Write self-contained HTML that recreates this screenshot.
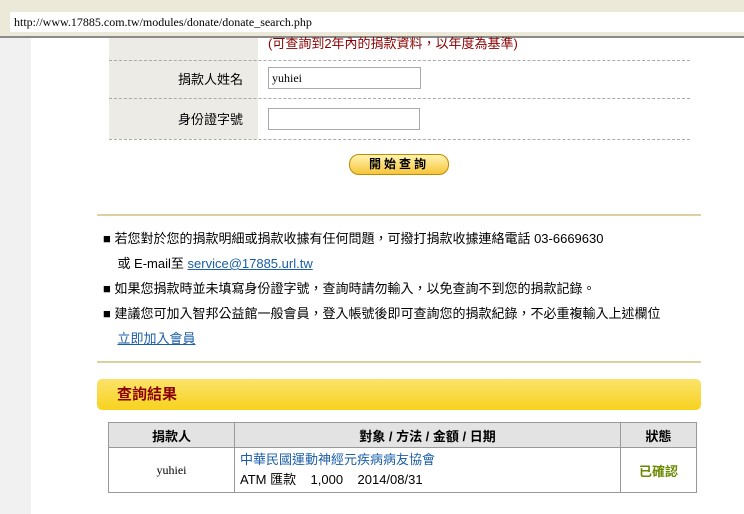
<!DOCTYPE html>
<html><head><meta charset="utf-8"><style>
body{margin:0;width:744px;height:514px;overflow:hidden;background:#fff;font-family:"Liberation Serif","Noto Sans CJK TC",serif;font-size:13px;position:relative;color:#000}
.a{position:absolute}
.cjk{font-family:"Liberation Sans","Noto Sans CJK TC",sans-serif}
</style></head><body>
<div class="a" style="left:0;top:0;width:744px;height:8px;background:#ece9d8"></div>
<div class="a" style="left:0;top:8px;width:744px;height:28px;background:#ece9d8;border-bottom:2px solid #8a8a8a"></div>
<div class="a" style="left:10px;top:12px;width:734px;height:20px;background:#fff;font-size:12px;line-height:20px;padding-left:4px">http://www.17885.com.tw/modules/donate/donate_search.php</div>
<div class="a" style="left:0;top:38px;width:31px;height:476px;background:#f1f1f1"></div>
<div class="a" style="left:109px;top:38px;width:149px;height:101px;background:#ecebe6"></div>
<div class="a cjk" style="left:268px;top:33px;color:#8b0000;font-size:13px">(可查詢到2年內的捐款資料，以年度為基準)</div>
<div class="a" style="left:109px;top:60px;width:581px;border-top:1px dashed #aaa"></div>
<div class="a" style="left:109px;top:98px;width:581px;border-top:1px dashed #aaa"></div>
<div class="a" style="left:109px;top:139px;width:581px;border-top:1px dashed #aaa"></div>
<div class="a cjk" style="left:178px;top:69px">捐款人姓名</div>
<div class="a cjk" style="left:178px;top:109px">身份證字號</div>
<div class="a" style="left:268px;top:67px;width:148px;height:20px;border:1px solid #aaa;padding-left:3px;line-height:20px;font-size:12px">yuhiei</div>
<div class="a" style="left:268px;top:108px;width:150px;height:20px;border:1px solid #aaa"></div>
<div class="a cjk" style="left:349px;top:154px;width:98px;height:19px;border-radius:10px;border:1px solid #c08a00;background:linear-gradient(#fff3b0,#f7c53a);text-align:center;font-weight:bold;font-size:12px;line-height:19px;letter-spacing:3px">開始查詢</div>
<div class="a" style="left:97px;top:214px;width:604px;height:2px;background:#ddd0a0"></div>
<div class="a cjk" style="left:103px;top:226px;font-size:13px;line-height:25px">■ 若您對於您的捐款明細或捐款收據有任何問題，可撥打捐款收據連絡電話 03-6669630<br>
&nbsp;&nbsp;&nbsp;&nbsp;或 E-mail至 <span style="color:#1a5ea8;text-decoration:underline">service@17885.url.tw</span><br>
■ 如果您捐款時並未填寫身份證字號，查詢時請勿輸入，以免查詢不到您的捐款記錄。<br>
■ 建議您可加入智邦公益館一般會員，登入帳號後即可查詢您的捐款紀錄，不必重複輸入上述欄位<br>
&nbsp;&nbsp;&nbsp;&nbsp;<span style="color:#1a5ea8;text-decoration:underline">立即加入會員</span></div>
<div class="a" style="left:97px;top:361px;width:604px;height:2px;background:#ddd0a0"></div>
<div class="a cjk" style="left:97px;top:379px;width:604px;height:31px;border-radius:5px;background:linear-gradient(#fbe36a,#f7d21e);color:#8b0000;font-weight:bold;font-size:15px;line-height:31px;text-indent:20px">查詢結果</div>
<table class="a cjk" style="left:108px;top:422px;width:589px;border-collapse:collapse;font-size:13px">
<tr style="background:#e3e3e3;height:25px;font-weight:bold"><td style="border:1px solid #999;width:123px;text-align:center">捐款人</td><td style="border:1px solid #999;text-align:center">對象 / 方法 / 金額 / 日期</td><td style="border:1px solid #999;width:73px;text-align:center">狀態</td></tr>
<tr style="height:45px"><td style="border:1px solid #999;text-align:center;font-family:'Liberation Serif',serif;font-size:12px">yuhiei</td><td style="border:1px solid #999;padding-left:5px;line-height:20px"><span style="color:#1a5ea8">中華民國運動神經元疾病病友協會</span><br>ATM 匯款 &nbsp;&nbsp;&nbsp;1,000 &nbsp;&nbsp;&nbsp;2014/08/31</td><td style="border:1px solid #999;text-align:center;color:#6a8a00;font-weight:bold;font-size:13px">已確認</td></tr>
</table>
</body></html>
